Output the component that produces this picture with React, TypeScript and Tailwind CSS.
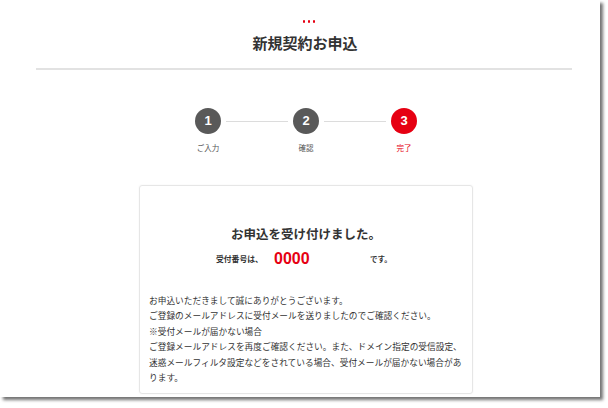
import React from "react";

const jp = { fontFamily: '"Noto Sans CJK JP", "Noto Sans", sans-serif' };

const steps = [
  { no: "1", label: "ご入力", done: false },
  { no: "2", label: "確認", done: false },
  { no: "3", label: "完了", done: true },
];

function Steps() {
  return (
    <div className="flex justify-center pl-[4px] mt-[38px]">
      {steps.map((s, i) => (
        <React.Fragment key={s.no}>
          {i > 0 && (
            <div className="w-[72px] h-[26px] flex items-center px-[5px]">
              <div className="h-px w-full bg-[#dcdcdc]" />
            </div>
          )}
          <div className="relative w-[26px] flex flex-col items-center">
            <div
              className={`w-[26px] h-[26px] rounded-full flex items-center justify-center text-white text-[13px] font-bold ${s.done ? "bg-[#e60012]" : "bg-[#595959]"}`}
              style={{ fontFamily: '"Liberation Sans", Arial, sans-serif' }}
            >
              {s.no}
            </div>
            <div className={`mt-[9px] whitespace-nowrap text-[7.5px] leading-[10px] ${s.done ? "text-[#e60012]" : "text-[#555]"}`}>{s.label}</div>
          </div>
        </React.Fragment>
      ))}
    </div>
  );
}

export default function App() {
  return (
    <div className="w-[608px] h-[408px] bg-white" style={jp}>
      <div className="w-[600px] h-[397px] bg-white shadow-[3px_3px_3px_rgba(0,0,0,0.55)] overflow-hidden text-[#333]">
        <div className="ml-[36px] w-[536px]">
          {/* heading */}
          <div className="flex justify-center gap-[2.5px] pt-[20px] pl-[10px]">
            <span className="w-[2.5px] h-[2.5px] rounded-full bg-[#e60012]" />
            <span className="w-[2.5px] h-[2.5px] rounded-full bg-[#e60012]" />
            <span className="w-[2.5px] h-[2.5px] rounded-full bg-[#e60012]" />
          </div>
          <h1 className="mt-[10.5px] text-center text-[15px] leading-[20px] font-bold pl-[2px]">新規契約お申込</h1>
          <div className="mt-[15px] h-[2px] bg-[#e2e2e2]" />

          <Steps />

          {/* result card */}
          <div className="ml-[103px] mt-[32px] w-[334px] h-[209px] border border-[#e6e6e6] rounded-[3px] shadow-[0_0_2px_rgba(0,0,0,0.06)]">
            <div className="mt-[40px] text-center text-[12.5px] leading-[16px] font-bold">お申込を受け付けました。</div>
            <div className="mt-[8px] flex items-center pl-[76px] h-[18px]">
              <span className="text-[7.8px] font-bold w-[47px] whitespace-nowrap">受付番号は、</span>
              <span
                className="ml-[11px] w-[96px] text-[16px] font-bold text-[#e60012]"
                style={{ fontFamily: '"Liberation Sans", Arial, sans-serif' }}
              >
                0000
              </span>
              <span className="text-[7.5px] font-bold whitespace-nowrap">です。</span>
            </div>
            <div className="mt-[25px] px-[9px] text-[8.7px] leading-[15.4px] text-[#333]">
              <p>お申込いただきまして誠にありがとうございます。</p>
              <p>ご登録のメールアドレスに受付メールを送りましたのでご確認ください。</p>
              <p>※受付メールが届かない場合</p>
              <p>ご登録メールアドレスを再度ご確認ください。また、ドメイン指定の受信設定、迷惑メールフィルタ設定などをされている場合、受付メールが届かない場合があります。</p>
            </div>
          </div>
        </div>
      </div>
    </div>
  );
}
